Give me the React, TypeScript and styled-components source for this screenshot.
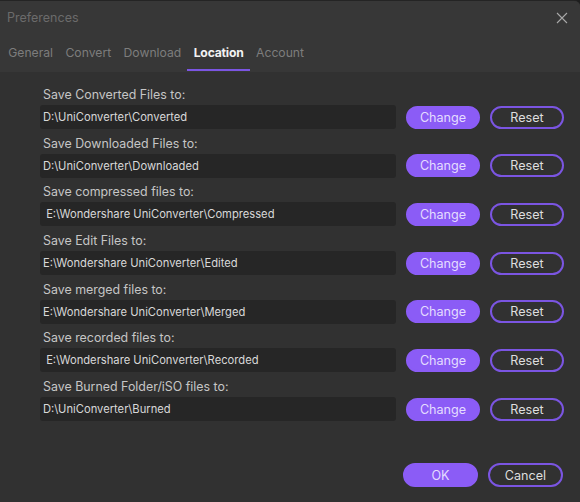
import React from "react";
import styled, { createGlobalStyle } from "styled-components";

const Global = createGlobalStyle`
  html, body { margin: 0; padding: 0; background: #1e1e1e; }
  body { font-family: Inter, "Noto Sans", sans-serif; }
  * { box-sizing: border-box; }
`;

const Window = styled.div`
  width: 580px;
  height: 502px;
  background: #313131;
  border-top: 1px solid #242424;
  border-top-right-radius: 6px;
  display: flex;
  flex-direction: column;
  overflow: hidden;
`;

const Header = styled.div`
  background: #373737;
  height: 71px;
  display: flex;
  flex-direction: column;
`;

const TitleBar = styled.div`
  height: 33px;
  display: flex;
  align-items: center;
  justify-content: space-between;
  padding: 0 10px 0 7px;
`;

const Title = styled.div`
  color: #6b6b6b;
  font-size: 12.5px;
`;

const Close = styled.div`
  width: 16px;
  height: 16px;
  display: flex;
  align-items: center;
  justify-content: center;
`;

const Tabs = styled.div`
  display: flex;
  height: 38px;
  padding-left: 2px;
`;

const Tab = styled.div<{ $active?: boolean }>`
  position: relative;
  padding: 0 6.2px;
  font-size: 12.2px;
  line-height: 38px;
  color: ${(p) => (p.$active ? "#f2f2f2" : "#7d7d7d")};
  font-weight: ${(p) => (p.$active ? 700 : 400)};
  letter-spacing: ${(p) => (p.$active ? "-0.2px" : "0")};
  &::after {
    content: "";
    display: ${(p) => (p.$active ? "block" : "none")};
    position: absolute;
    left: 0;
    right: 0;
    bottom: 1px;
    height: 2px;
    background: #7b55e2;
  }
`;

const Body = styled.div`
  flex: 1;
  display: flex;
  flex-direction: column;
  padding: 13px 16px 15px 40px;
`;

const List = styled.div`
  display: flex;
  flex-direction: column;
  gap: 4.7px;
`;

const Row = styled.div`
  display: grid;
  grid-template-columns: 356px 74px 74px;
  grid-template-rows: 20px 24px;
  column-gap: 10px;
`;

const Label = styled.div`
  grid-column: 1 / -1;
  color: #c6c6c6;
  font-size: 12.4px;
  line-height: 20px;
  padding-left: 3px;
`;

const PathBox = styled.div`
  background: #262626;
  border-radius: 3px;
  color: #d8d8d8;
  font-size: 11.2px;
  line-height: 24px;
  padding-left: 3px;
  white-space: pre;
  overflow: hidden;
`;

const Btn = styled.button<{ $primary?: boolean }>`
  height: 23px;
  margin-top: 0.5px;
  border-radius: 12px;
  font-family: Inter, "Noto Sans", sans-serif;
  font-size: 12.6px;
  cursor: pointer;
  padding: 0;
  border: 2px solid #7b55e2;
  background: ${(p) => (p.$primary ? "#8b5cf6" : "transparent")};
  border-color: ${(p) => (p.$primary ? "#8b5cf6" : "#7b55e2")};
  color: ${(p) => (p.$primary ? "#e4dcff" : "#dedede")};
`;

const Footer = styled.div`
  margin-top: auto;
  display: flex;
  justify-content: flex-end;
  gap: 10px;
  padding-right: 1px;
`;

const FooterBtn = styled(Btn)`
  width: 75px;
  height: 24px;
`;

const rows = [
  ["Save Converted Files to:", "D:\\UniConverter\\Converted"],
  ["Save Downloaded Files to:", "D:\\UniConverter\\Downloaded"],
  ["Save compressed files to:", " E:\\Wondershare UniConverter\\Compressed"],
  ["Save Edit Files to:", "E:\\Wondershare UniConverter\\Edited"],
  ["Save merged files to:", "E:\\Wondershare UniConverter\\Merged"],
  ["Save recorded files to:", " E:\\Wondershare UniConverter\\Recorded"],
  ["Save Burned Folder/iSO files to:", "D:\\UniConverter\\Burned"],
];

export default function App() {
  return (
    <>
      <Global />
      <Window>
        <Header>
          <TitleBar>
            <Title>Preferences</Title>
            <Close>
              <svg width="12" height="12" viewBox="0 0 12 12">
                <path d="M1 1 L11 11 M11 1 L1 11" stroke="#a8a8a8" strokeWidth="1.1" fill="none" />
              </svg>
            </Close>
          </TitleBar>
          <Tabs>
            <Tab>General</Tab>
            <Tab>Convert</Tab>
            <Tab>Download</Tab>
            <Tab $active>Location</Tab>
            <Tab>Account</Tab>
          </Tabs>
        </Header>
        <Body>
          <List>
            {rows.map(([label, path]) => (
              <Row key={label}>
                <Label>{label}</Label>
                <PathBox>{path}</PathBox>
                <Btn $primary>Change</Btn>
                <Btn>Reset</Btn>
              </Row>
            ))}
          </List>
          <Footer>
            <FooterBtn $primary>OK</FooterBtn>
            <FooterBtn>Cancel</FooterBtn>
          </Footer>
        </Body>
      </Window>
    </>
  );
}
